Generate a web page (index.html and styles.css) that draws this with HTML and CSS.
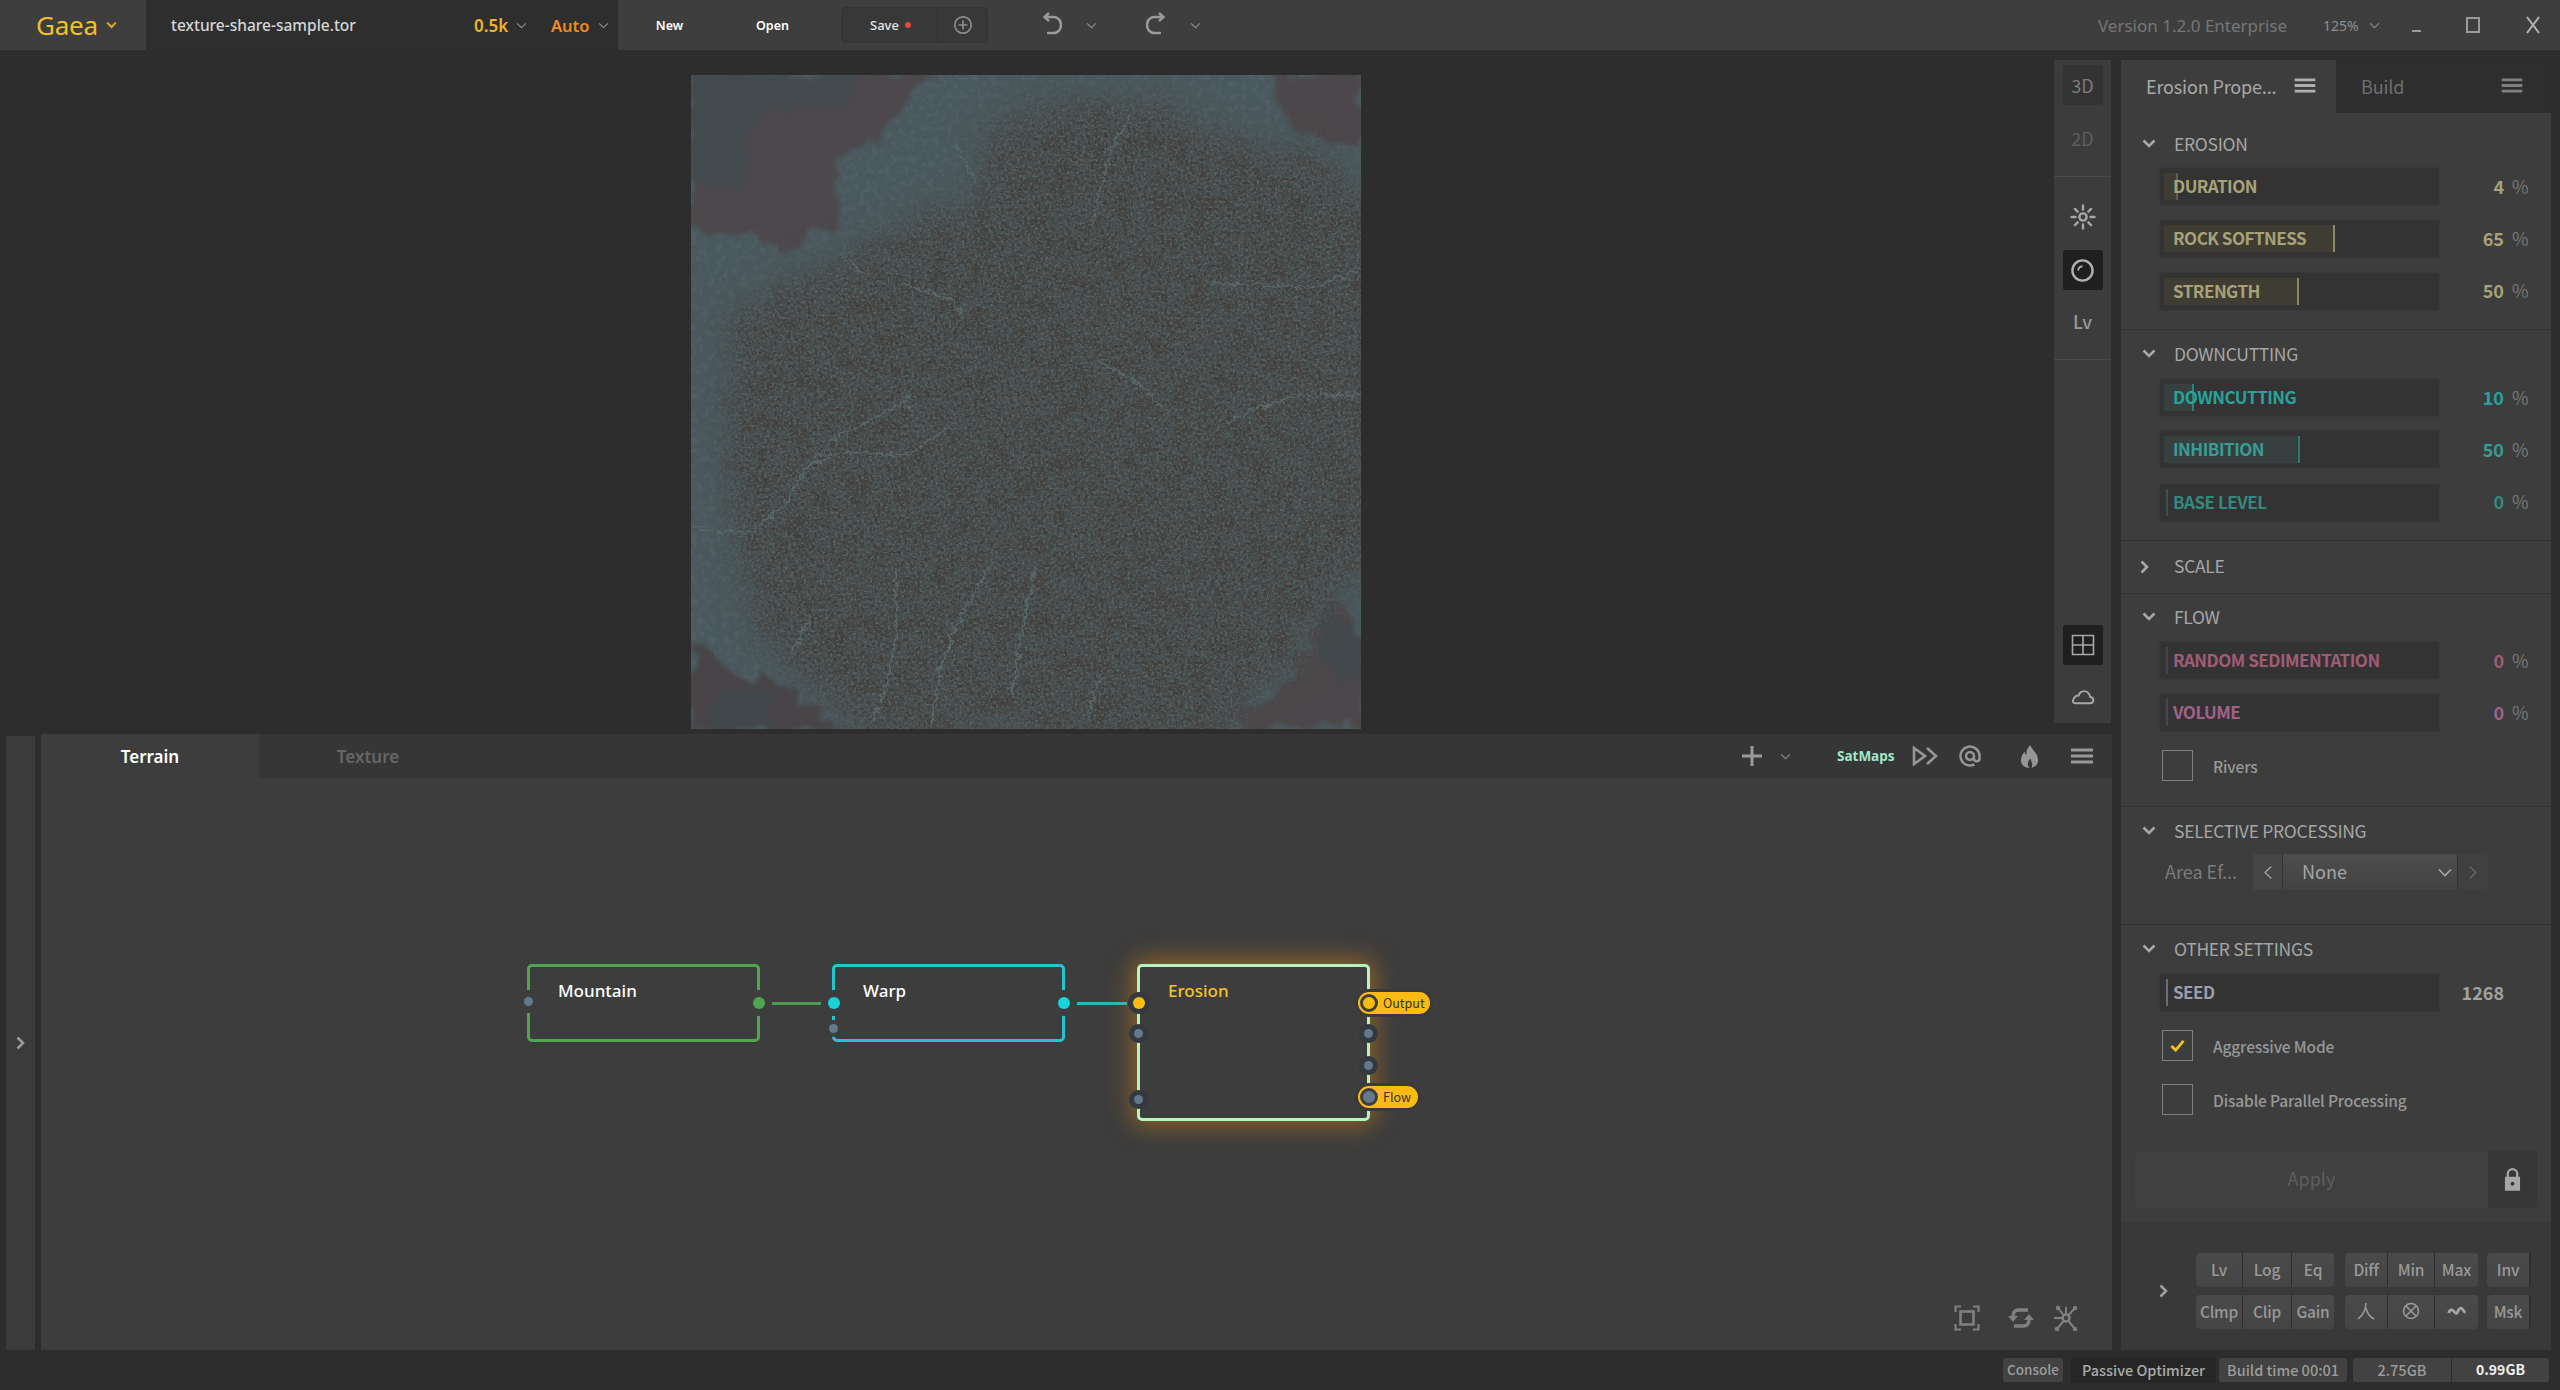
FILE: index.html
```html
<!DOCTYPE html>
<html lang="en">
<head>
<meta charset="utf-8">
<title>Gaea</title>
<link rel="stylesheet" href="styles.css">
</head>
<body>
<svg class="defs" width="0" height="0" aria-hidden="true">
  <symbol id="chev" viewBox="0 0 12 8"><path d="M1 1.5 6 6.5 11 1.5" fill="none" stroke="currentColor" stroke-width="1.3"/></symbol>
  <symbol id="chevb" viewBox="0 0 14 9"><path d="M1.5 1.5 7 7 12.5 1.5" fill="none" stroke="currentColor" stroke-width="2.6"/></symbol>
  <symbol id="chevr" viewBox="0 0 9 14"><path d="M1.5 1.5 7 7 1.5 12.5" fill="none" stroke="currentColor" stroke-width="2.6"/></symbol>
  <symbol id="menu" viewBox="0 0 22 16"><path d="M0 2h22M0 8h22M0 14h22" stroke="currentColor" stroke-width="3"/></symbol>
</svg>
<div class="app">
  <header class="topbar">
    <div class="brand"><span class="brand-name">Gaea</span><svg class="ic-brand"><use href="#chevb"/></svg></div>
    <div class="filebar">
      <span class="fname">texture-share-sample.tor</span>
      <span class="res">0.5k</span><svg class="ic-sel"><use href="#chev"/></svg>
      <span class="auto">Auto</span><svg class="ic-sel"><use href="#chev"/></svg>
    </div>
    <button class="tb new">New</button>
    <button class="tb open">Open</button>
    <div class="savegrp">
      <button class="save">Save<i class="dot"></i></button>
      <button class="plus"><svg viewBox="0 0 20 20" width="20" height="20"><circle cx="10" cy="10" r="8.2" fill="none" stroke="#8c8c8c" stroke-width="1.7"/><path d="M10 5.5v9M5.500 10h9" stroke="#8c8c8c" stroke-width="1.7"/></svg></button>
    </div>
    <svg class="ic-hist first" viewBox="0 0 20 26"><path d="M3 5h9a7 8 0 0 1 0 16H5" fill="none" stroke="#9b9b9b" stroke-width="2.4"/><path d="M7 1 2.500 5 7 9" fill="none" stroke="#9b9b9b" stroke-width="2.4"/></svg>
    <svg class="ic-sel hist"><use href="#chev"/></svg>
    <svg class="ic-hist second" viewBox="0 0 20 26"><path d="M17 5H8a7 8 0 0 0 0 16h7" fill="none" stroke="#9b9b9b" stroke-width="2.4"/><path d="M13 1l4.500 4L13 9" fill="none" stroke="#9b9b9b" stroke-width="2.4"/></svg>
    <svg class="ic-sel hist"><use href="#chev"/></svg>
    <div class="winbar">
      <span class="version">Version 1.2.0 Enterprise</span>
      <span class="zoomv">125%</span><svg class="ic-sel"><use href="#chev"/></svg>
      <i class="w-min"></i><i class="w-max"></i>
      <svg class="w-close" viewBox="0 0 16 18"><path d="M2 1 14 17M14 1 2 17" stroke="#b5b5b5" stroke-width="2"/></svg>
    </div>
  </header>

  <div class="main">
    <div class="work">
      <div class="viewport">
        <div class="preview">
          <svg viewBox="0 0 670 654" width="670" height="654" role="img" aria-label="Eroded terrain texture" color-interpolation-filters="sRGB">
            <defs>
              <filter id="rough" x="-10%" y="-10%" width="120%" height="120%" color-interpolation-filters="sRGB"><feTurbulence type="fractalNoise" baseFrequency="0.03" numOctaves="5" seed="7"/><feDisplacementMap in="SourceGraphic" scale="40" xChannelSelector="R" yChannelSelector="G"/><feGaussianBlur stdDeviation="2"/></filter>
              <filter id="blob" x="-10%" y="-10%" width="120%" height="120%" color-interpolation-filters="sRGB"><feTurbulence type="fractalNoise" baseFrequency="0.025" numOctaves="5" seed="14"/><feDisplacementMap in="SourceGraphic" scale="60" xChannelSelector="R" yChannelSelector="G"/><feGaussianBlur stdDeviation="16"/></filter>
              <filter id="rough2" x="-10%" y="-10%" width="120%" height="120%" color-interpolation-filters="sRGB"><feTurbulence type="fractalNoise" baseFrequency="0.14" numOctaves="4" seed="3"/><feDisplacementMap in="SourceGraphic" scale="10" xChannelSelector="G" yChannelSelector="R"/></filter>
              <filter id="specks" x="0" y="0" width="100%" height="100%" color-interpolation-filters="sRGB"><feTurbulence type="fractalNoise" baseFrequency="0.3" numOctaves="3" seed="11"/><feColorMatrix values="0 0 0 0 .255  0 0 0 0 .24  0 0 0 0 .22  7 0 0 0 -3.500"/></filter>
              <filter id="light" x="0" y="0" width="100%" height="100%" color-interpolation-filters="sRGB"><feTurbulence type="fractalNoise" baseFrequency="0.38" numOctaves="3" seed="23"/><feColorMatrix values="0 0 0 0 .345  0 0 0 0 .385  0 0 0 0 .395  0 7 0 0 -3.800"/></filter>
              <filter id="pale" x="0" y="0" width="100%" height="100%" color-interpolation-filters="sRGB"><feTurbulence type="fractalNoise" baseFrequency="0.16" numOctaves="3" seed="31"/><feColorMatrix values="0 0 0 0 .335  0 0 0 0 .395  0 0 0 0 .415  0 6 0 0 -3"/></filter>
              <filter id="brown" x="0" y="0" width="100%" height="100%" color-interpolation-filters="sRGB"><feTurbulence type="fractalNoise" baseFrequency="0.05" numOctaves="4" seed="5"/><feColorMatrix values="0 0 0 0 .27  0 0 0 0 .25  0 0 0 0 .23  5 0 0 0 -2.500"/></filter>
              <mask id="centre" maskUnits="userSpaceOnUse" x="0" y="0" width="670" height="654">
                <path filter="url(#blob)" fill="#fff" d="M40 230 125 195 205 160 285 125 300 45 470 15 510 65 625 75 690 130V500L640 530 585 620 515 670H185L120 620 55 555 30 400Z"/>
              </mask>
            </defs>
            <rect width="670" height="654" fill="#4a595d"/>
            <rect width="670" height="654" filter="url(#pale)" opacity=".5"/>
            <g filter="url(#rough)">
              <path d="M0 0H245L205 40 150 90 140 150 95 172 40 155 0 150Z" fill="#4c484b"/>
              <path d="M0 0H170L150 25 60 42 50 110 0 115Z" fill="#434a4e"/>
              <path d="M580 0H670V75L610 60 585 35Z" fill="#4c474a"/>
              <path d="M640 520 670 540V654H530L600 600 620 570Z" fill="#4c474a"/>
              <path d="M628 530 670 548V600L648 602 630 575Z" fill="#42484b"/>
              <path d="M0 570 50 595 110 625 150 654H0Z" fill="#484447"/>
              <path d="M25 612 70 614 95 654H25Z" fill="#41474a"/>
            </g>
            <g mask="url(#centre)">
              <rect width="670" height="654" fill="#484f50"/>
              <rect width="670" height="654" filter="url(#brown)" opacity=".55"/>
              <rect width="670" height="654" filter="url(#specks)" opacity=".85"/>
              <rect width="670" height="654" filter="url(#light)" opacity=".85"/>
            </g>
            <g filter="url(#rough2)" fill="none" stroke="#5d6e72" stroke-opacity=".85" stroke-width="1.600">
              <path d="M0 452 28 457 62 456 95 428 115 392 150 377 218 380 258 352"/>
              <path d="M115 392 148 360 200 335 220 320"/>
              <path d="M205 495 205 560 195 610 180 650"/>
              <path d="M300 490 270 540 250 590 240 650"/>
              <path d="M345 490 330 560 320 620"/>
              <path d="M670 320 600 322 560 335 530 350"/>
              <path d="M670 195 620 212 520 208"/>
              <path d="M440 40 420 75 400 150"/>
              <path d="M265 70 285 110"/>
              <path d="M405 285 450 310 480 340"/>
              <path d="M150 180 175 200"/>
              <path d="M410 600 395 640"/>
              <path d="M120 540 100 580"/>
              <path d="M225 340 215 330M215 210 260 225 275 240"/>
            </g>
          </svg>
        </div>
        <aside class="vtools">
          <div class="vbtn on">3D</div>
          <div class="vbtn dim">2D</div>
          <hr class="vsep">
          <div class="vbtn"><svg viewBox="0 0 26 26" width="26" height="26"><g stroke="#a6a6a6" stroke-width="2.400" stroke-linecap="round"><path d="M13 1.500v4M13 20.500v4M1.500 13h4M20.500 13h4M4.900 4.900l2.800 2.800M18.300 18.300l2.800 2.800M4.900 21.100l2.800-2.800M18.300 7.700l2.800-2.800"/></g><circle cx="13" cy="13" r="3.600" fill="none" stroke="#a6a6a6" stroke-width="2.400"/></svg></div>
          <div class="vbtn black"><svg viewBox="0 0 26 26" width="25" height="25"><circle cx="13" cy="13" r="10.500" fill="none" stroke="#b0b0b0" stroke-width="2.500"/><path d="M8.500 13A4.600 4.600 0 0 1 13 8.500" fill="none" stroke="#b0b0b0" stroke-width="2"/></svg></div>
          <div class="vbtn lv">Lv</div>
          <hr class="vsep">
          <div class="vspace"></div>
          <div class="vbtn black"><svg viewBox="0 0 24 24" width="24" height="24"><path d="M1.500 2.500h21v19h-21zM12 2.500v19M1.500 12h21" fill="none" stroke="#a8a8a8" stroke-width="1.600"/></svg></div>
          <div class="vbtn cloud"><svg viewBox="0 0 26 18" width="25" height="18"><path d="M5.500 15.500h15c5 0 5-6 .5-6.500C20.500 5 17 2.500 14 3c-3 .3-4.500 2.500-5 4.500C4 7.500 .5 15.500 5.500 15.500Z" fill="none" stroke="#a6a6a6" stroke-width="2"/></svg></div>
        </aside>
      </div>
      <div class="nodezone">
        <div class="strip"><svg class="strip-c"><use href="#chevr"/></svg></div>
        <section class="graph">
          <div class="graphbar">
            <div class="gtab active">Terrain</div>
            <div class="gtab">Texture</div>
            <div class="gtools">
              <svg class="g-plus" viewBox="0 0 20 20"><path d="M10 0v20M0 10h20" stroke="#9a9a9a" stroke-width="3"/></svg>
              <svg class="ic-sel g-chev"><use href="#chev"/></svg>
              <span class="satmaps">SatMaps</span>
              <svg class="g-ff" viewBox="0 0 26 20"><path d="M2 2 13 10 2 18Z" fill="none" stroke="#969696" stroke-width="2.600"/><path d="M15 2 24 10 15 18" fill="none" stroke="#969696" stroke-width="2.600"/></svg>
              <svg class="g-at" viewBox="0 0 24 24"><path d="M16 12a4 4 0 1 1 0-.1V15a2.800 2.800 0 0 0 5.500 0V12a9.500 9.500 0 1 0-5 8.400" fill="none" stroke="#969696" stroke-width="2.500"/></svg>
              <svg class="g-fire" viewBox="0 0 20 24"><path fill-rule="evenodd" d="M11 0c1 5 8 8 8 16 0 5-4 8-9 8s-9-3-9-8c0-4 2-7 4-9 0 2 1 3 2 3-1-4 1-7 4-10ZM10 24c-3-3-2-7 1-10 1 4 3 6 1 10Z" fill="#969696"/></svg>
              <svg class="g-menu"><use href="#menu"/></svg>
            </div>
          </div>
          <div class="canvas">
            <div class="wire w1"></div>
            <div class="wire w2"></div>
            <article class="node mountain">
              <span class="ntitle">Mountain</span>
              <i class="port in p-a"></i><i class="port big green p-b"></i>
            </article>
            <article class="node warp">
              <span class="ntitle">Warp</span>
              <i class="port big cyan in p-a"></i><i class="port in p-c"></i><i class="port big cyan p-b"></i>
            </article>
            <article class="node erosion">
              <span class="ntitle">Erosion</span>
              <i class="port big yellow halo in p-a"></i>
              <i class="port halo in p-d"></i><i class="port halo in p-e"></i>
              <i class="port halo out p-d"></i><i class="port halo out p-f"></i>
              <span class="pill p-out"><i class="ring"></i>Output</span>
              <span class="pill p-flow"><i class="ring blue"></i>Flow</span>
            </article>
            <div class="canvastools">
              <svg viewBox="0 0 26 26" width="26" height="26"><path d="M1.500 7V1.500H7M19 1.500h5.500V7M24.500 19v5.500H19M7 24.500H1.500V19" fill="none" stroke="#808080" stroke-width="2.200"/><rect x="6.500" y="6.500" width="13" height="13" fill="none" stroke="#808080" stroke-width="2.600"/></svg>
              <svg class="t-sync" viewBox="0 0 26 24" width="26" height="24"><path d="M5 10C5 5 8 4 11 4h9M21 14c0 5-3 6-6 6H6" fill="none" stroke="#808080" stroke-width="3.400"/><path d="M0 10h10l-5 6zM26 14H16l5-6z" fill="#808080"/></svg>
              <svg class="t-net" viewBox="0 0 26 26" width="26" height="26"><g stroke="#808080" stroke-width="2"><path d="M13 13 5 3M13 13 22 3M13 13 4 24M13 13 22 24M13 13 1 13M13 13 13 2"/></g><circle cx="13" cy="13" r="3.500" fill="#3d3d3d" stroke="#808080" stroke-width="2.500"/><circle cx="5" cy="3" r="2.200" fill="#808080"/><circle cx="22" cy="3" r="2.200" fill="#808080"/><circle cx="4" cy="24" r="2.200" fill="#808080"/><circle cx="22" cy="24" r="2.200" fill="#808080"/></svg>
            </div>
          </div>
        </section>
      </div>
    </div>

    <aside class="props">
      <div class="ptabs">
        <div class="ptab active"><span>Erosion Prope...</span><svg class="p-menu"><use href="#menu"/></svg></div>
        <div class="ptab"><span>Build</span><svg class="p-menu"><use href="#menu"/></svg></div>
      </div>
      <section class="sec s-erosion">
        <h3 class="sh"><svg class="sc"><use href="#chevb"/></svg>EROSION</h3>
        <div class="rows">
          <div class="row c-tan m-dim"><div class="slot"><span class="fill" style="width:14px"></span><span class="lab">DURATION</span></div><b class="val">4</b><span class="pct">%</span></div>
          <div class="row c-tan"><div class="slot"><span class="fill" style="width:171px"></span><span class="lab">ROCK SOFTNESS</span></div><b class="val">65</b><span class="pct">%</span></div>
          <div class="row c-tan"><div class="slot"><span class="fill" style="width:135px"></span><span class="lab">STRENGTH</span></div><b class="val">50</b><span class="pct">%</span></div>
        </div>
      </section>
      <section class="sec s-down">
        <h3 class="sh"><svg class="sc"><use href="#chevb"/></svg>DOWNCUTTING</h3>
        <div class="rows">
          <div class="row c-teal"><div class="slot"><span class="fill" style="width:30px"></span><span class="lab">DOWNCUTTING</span></div><b class="val">10</b><span class="pct">%</span></div>
          <div class="row c-teal2"><div class="slot"><span class="fill" style="width:136px"></span><span class="lab">INHIBITION</span></div><b class="val">50</b><span class="pct">%</span></div>
          <div class="row c-teal3"><div class="slot"><span class="fill" style="width:4px"></span><span class="lab">BASE LEVEL</span></div><b class="val">0</b><span class="pct">%</span></div>
        </div>
      </section>
      <section class="sec s-scale">
        <h3 class="sh"><svg class="sc right"><use href="#chevr"/></svg>SCALE</h3>
      </section>
      <section class="sec s-flow">
        <h3 class="sh"><svg class="sc"><use href="#chevb"/></svg>FLOW</h3>
        <div class="rows">
          <div class="row c-rose"><div class="slot"><span class="fill" style="width:4px"></span><span class="lab">RANDOM SEDIMENTATION</span></div><b class="val">0</b><span class="pct">%</span></div>
          <div class="row c-plum"><div class="slot"><span class="fill" style="width:4px"></span><span class="lab">VOLUME</span></div><b class="val">0</b><span class="pct">%</span></div>
        </div>
        <label class="check first"><i class="box"></i>Rivers</label>
      </section>
      <section class="sec s-sel">
        <h3 class="sh"><svg class="sc"><use href="#chevb"/></svg>SELECTIVE PROCESSING</h3>
        <div class="area">
          <span class="area-l">Area Ef...</span>
          <div class="spin">
            <span class="sp-b"><svg viewBox="0 0 10 16" width="10" height="15"><path d="M8.500 1.500 2 8l6.500 6.500" fill="none" stroke="#a0a0a0" stroke-width="1.600"/></svg></span>
            <span class="sp-m">None<svg class="sp-c" viewBox="0 0 14 9"><path d="M1 1.500 7 7.500l6-6" fill="none" stroke="#a8a8a8" stroke-width="1.600"/></svg></span>
            <span class="sp-b off"><svg viewBox="0 0 10 16" width="10" height="15"><path d="M1.500 1.500 8 8l-6.500 6.500" fill="none" stroke="#666" stroke-width="1.600"/></svg></span>
          </div>
        </div>
      </section>
      <section class="sec s-other">
        <h3 class="sh"><svg class="sc"><use href="#chevb"/></svg>OTHER SETTINGS</h3>
        <div class="rows">
          <div class="row c-seed"><div class="slot"><span class="fill" style="width:4px"></span><span class="lab">SEED</span></div><b class="val seedv">1268</b></div>
        </div>
        <label class="check aggr"><i class="box"><svg viewBox="0 0 16 14" width="15" height="13"><path d="M1.500 7.500 6 12 14.500 2" fill="none" stroke="#f4c21d" stroke-width="3"/></svg></i>Aggressive Mode</label>
        <label class="check dis"><i class="box"></i>Disable Parallel Processing</label>
      </section>
      <div class="applyrow">
        <div class="apply">Apply</div>
        <div class="lock"><svg viewBox="0 0 18 26" width="17" height="25"><path d="M4 11V7a5 5 0 0 1 10 0v4" fill="none" stroke="#a6a6a6" stroke-width="2.400"/><path fill-rule="evenodd" d="M1 10h16v15H1ZM9 15.500a2 2 0 1 0 .01 0Z" fill="#a6a6a6"/></svg></div>
      </div>
      <div class="quick">
        <svg class="q-c"><use href="#chevr"/></svg>
        <div class="qgrid">
          <div class="qg g1"><button>Lv</button><button>Log</button><button>Eq</button></div>
          <div class="qg g2"><button>Diff</button><button>Min</button><button>Max</button></div>
          <div class="qg g3"><button>Inv</button></div>
          <div class="qg g1"><button>Clmp</button><button>Clip</button><button>Gain</button></div>
          <div class="qg g2">
            <button><svg viewBox="0 0 18 18" width="18" height="18"><path d="M9 1C9 8 6 13 1 17M9 6c1 5 4 9 8 11" fill="none" stroke="#9a9a9a" stroke-width="1.500"/></svg></button>
            <button><svg viewBox="0 0 18 18" width="18" height="18"><circle cx="9" cy="9" r="7.500" fill="none" stroke="#9a9a9a" stroke-width="1.500"/><path d="M4 4l10 10M14 4 4 14" stroke="#9a9a9a" stroke-width="1.500"/></svg></button>
            <button><svg viewBox="0 0 20 10" width="20" height="10"><path d="M1.500 7C3 3 5 3 7 5.500S10 8 11 5 14 1 16 4 18 6 18.500 6" fill="none" stroke="#a8a8a8" stroke-width="2.800"/></svg></button>
          </div>
          <div class="qg g3"><button>Msk</button></div>
        </div>
      </div>
    </aside>
  </div>

  <footer class="status">
    <span class="st console">Console</span>
    <span class="st passive">Passive Optimizer</span>
    <span class="st build">Build time 00:01</span>
    <div class="mem"><span class="st m1">2.75GB</span><span class="st m2">0.99GB</span></div>
  </footer>
</div>
</body>
</html>
```
FILE: styles.css
```css
* { box-sizing: border-box; }
html, body { margin: 0; padding: 0; }
body { background: #2d2d2d; color: #aaa; font-family: "Noto Sans CJK SC", "Noto Sans", sans-serif; }
.defs { position: absolute; }
button { font: inherit; border: 0; padding: 0; }
i { display: block; font-style: normal; }

.app { width: 2560px; height: 1390px; display: grid; grid-template-rows: 50px 1300px 40px; overflow: hidden; }

/* top bar */
.topbar { display: flex; align-items: center; background: #3e3e3e; font-family: "Noto Sans", sans-serif; }
.brand { width: 146px; height: 50px; display: flex; align-items: center; padding-left: 36px; color: #f2c02a; }
.brand-name { font-size: 26px; line-height: 50px; width: 70px; letter-spacing: -.2px; }
.ic-brand { width: 11px; height: 8px; color: #e3ad28; }
.filebar { width: 472px; height: 50px; background: #2e2e2e; display: flex; align-items: center; padding-left: 25px; }
.fname { width: 303px; color: #d6d6d6; font-size: 15.500px; font-weight: 500; }
.res { width: 42px; color: #f0b429; font-size: 17px; font-weight: 600; }
.ic-sel { width: 11px; height: 7px; color: #8a8a8a; flex: none; }
.auto { margin-left: 24px; width: 44px; color: #f08c1c; font-size: 16.500px; font-weight: 600; }
.filebar .ic-sel:last-child { margin-left: 3px; }
.tb { width: 103px; height: 50px; background: none; color: #fff; font-size: 12.500px; font-weight: 600; }
.savegrp { margin-left: 17px; display: flex; width: 147px; height: 36px; border-radius: 5px; background: #383838; box-shadow: inset 0 0 0 1px #343434; }
.save { width: 97px; background: none; color: #e6e6e6; font-size: 13px; font-weight: 500; display: flex; align-items: center; padding-left: 29px; border-right: 1px solid #303030; }
.dot { width: 6px; height: 6px; border-radius: 50%; background: #e8453c; margin-left: 6px; }
.plus { width: 50px; background: none; display: flex; align-items: center; justify-content: center; }
.ic-hist { width: 20px; height: 26px; flex: none; }
.ic-hist.first { margin-left: 54px; }
.ic-hist.second { margin-left: 49px; }
.ic-sel.hist { margin-left: 24px; }
.winbar { margin-left: auto; display: flex; align-items: center; padding-right: 19px; }
.version { color: #767676; font-size: 17px; width: 225px; white-space: nowrap; }
.zoomv { color: #8e8e8e; font-size: 14px; width: 46px; }
.w-min { width: 9px; height: 2px; background: #9a9a9a; margin: 12px 0 0 32px; }
.w-max { width: 14px; height: 16px; border: 2px solid #9a9a9a; margin-left: 45px; }
.w-close { width: 16px; height: 18px; margin-left: 45px; }

/* main */
.main { display: flex; }
.work { width: 2112px; display: flex; flex-direction: column; }
.viewport { height: 684px; display: flex; }
.preview { margin: 25px 0 0 691px; width: 670px; height: 654px; }
.preview svg { display: block; }
.vtools { margin: 10px 0 0 693px; width: 57px; height: 663px; background: #3c3c3c; display: flex; flex-direction: column; align-items: center; padding-top: 5px; }
.vbtn { width: 40px; height: 40px; flex: none; border-radius: 2px; display: flex; align-items: center; justify-content: center; font-size: 18px; color: #999; }
.vbtn.on { background: #333; color: #7c7c7c; }
.vbtn.dim { margin-top: 13px; color: #5e5e5e; }
.vbtn.black { background: #1f1f1f; }
.vbtn.lv { margin-top: 11px; font-weight: 500; }
.vbtn.cloud { margin-top: 12px; }
.vsep { width: 100%; border: 0; border-top: 1px solid #4a4a4a; margin: 18px 0 20px; flex: none; }
.vsep:nth-of-type(2) { margin-bottom: 0; }
.vspace { flex: 1; }
.vtools .vbtn:nth-child(5) { margin-top: 13px; }
.vtools .vbtn:last-child { margin-bottom: 6px; }

/* graph */
.nodezone { flex: 1; display: flex; padding-left: 6px; }
.strip { width: 29px; margin-top: 2px; background: #3b3b3b; display: flex; align-items: flex-end; justify-content: center; padding-bottom: 300px; }
.strip-c { width: 9px; height: 14px; color: #999; }
.graph { margin-left: 6px; flex: 1; background: #3d3d3d; display: flex; flex-direction: column; }
.graphbar { height: 44px; background: #363636; display: flex; flex: none; }
.gtab { width: 218px; display: flex; align-items: center; justify-content: center; font-family: "Noto Sans", sans-serif; font-size: 17px; font-weight: 600; color: #666; }
.gtab.active { background: #3d3d3d; color: #fff; }
.gtools { flex: 1; display: flex; align-items: center; }
.g-plus { width: 20px; height: 20px; margin-left: 1265px; flex: none; }
.g-chev { margin-left: 18px; }
.satmaps { margin-left: 46px; width: 58px; font-size: 13.500px; font-weight: 700; color: #a0e8c8; font-family: "Noto Sans", sans-serif; white-space: nowrap; }
.g-ff { width: 26px; height: 20px; margin-left: 17px; flex: none; }
.g-at { width: 24px; height: 24px; margin-left: 20px; flex: none; }
.g-fire { width: 19px; height: 23px; margin-left: 38px; flex: none; }
.g-menu { width: 22px; height: 16px; margin-left: 32px; color: #999; flex: none; }

.canvas { flex: 1; position: relative; }
.node { position: absolute; top: 186px; height: 78px; width: 233px; border: 3px solid; border-radius: 5px; }
.mountain { left: 486px; border-color: #4fa64f; }
.warp { left: 791px; border-color: #22c6cf; }
.erosion { left: 1096px; width: 233px; height: 157px; border-color: #b8f2be; box-shadow: 0 0 24px 4px rgba(230, 140, 20, .5); }
.ntitle { position: absolute; left: 28px; top: 12px; font-family: "Noto Sans", sans-serif; font-size: 17px; line-height: 24px; font-weight: 500; color: #fff; }
.erosion .ntitle { color: #f4c22c; }
.port { position: absolute; width: 9px; height: 9px; border-radius: 50%; background: #64798a; box-shadow: 0 0 0 7px #3d3d3d; }
.port.big { width: 12px; height: 12px; }
.port.halo { box-shadow: 0 0 0 5px #33393e; }
.port.in { left: -6px; }
.port.big.in { left: -7.500px; }
.p-a { top: 30px; }
.p-b { right: -7.500px; top: 30px; }
.p-c { top: 57px; box-shadow: 0 0 0 4px #3d3d3d; }
.p-d { top: 62px; }
.p-e { top: 128px; }
.p-f { top: 94px; }
.port.out { right: -6px; }
.green { background: #4fa64f; }
.cyan { background: #18d4d8; }
.yellow { background: #fbbb12; }
.pill { position: absolute; left: 218px; height: 22px; border-radius: 11px; background: #fbbb12; color: #333; font-size: 12.500px; line-height: 22px; display: flex; align-items: center; padding-left: 25px; box-shadow: 0 0 0 3px #3a3a3a; }
.p-out { top: 25px; width: 72px; }
.p-flow { top: 119px; width: 60px; }
.ring { position: absolute; left: 2px; top: 2px; width: 18px; height: 18px; border-radius: 50%; background: #fbbb12; border: 3px solid #3e3e3e; }
.ring.blue { background: #64798a; }
.wire { position: absolute; height: 3px; top: 224px; }
.w1 { left: 730px; width: 50px; background: #4e9a4e; }
.w2 { left: 1034px; width: 52px; background: #27b6bd; }
.canvastools { position: absolute; right: 33px; bottom: 19px; display: flex; align-items: center; gap: 19px; }
.t-sync { margin-left: 9px; }

/* properties */
.props { margin: 10px 0 0 9px; width: 430px; height: 1290px; background: #3d3d3d; display: flex; flex-direction: column; font-size: 18px; }
.ptabs { display: flex; height: 53px; flex: none; background: #2e2e2e; }
.ptab { width: 215px; display: flex; align-items: center; color: #6f6f6f; padding: 0 0 2px 25px; position: relative; letter-spacing: -.15px; }
.ptab.active { background: #3d3d3d; color: #a9a9a9; }
.p-menu { position: absolute; right: 28px; top: 18px; width: 22px; height: 15px; color: #808080; }
.ptab.active .p-menu { right: 20px; color: #b0b0b0; }
.sec { flex: none; border-bottom: 1px solid #333; padding-top: 13px; }
.s-erosion { height: 217px; padding-top: 20px; }
.s-down { height: 211px; }
.s-scale { height: 53px; padding-top: 14px; }
.s-flow { height: 213px; padding-top: 12px; }
.s-sel { height: 118px; }
.s-other { height: 225px; border-bottom: 0; }
.sh { margin: 0; height: 24px; line-height: 22px; font-size: 17.500px; letter-spacing: -.3px; font-weight: 400; color: #a6a6a6; display: flex; align-items: center; padding: 0 0 2px 53px; position: relative; }
.sc { position: absolute; left: 21px; top: 6px; width: 14px; height: 9px; color: #a8a8a8; }
.sc.right { left: 19px; top: 5px; width: 9px; height: 14px; }
.rows { display: flex; flex-direction: column; gap: 13.330px; margin-top: 11px; }
.s-erosion .rows { margin-top: 10px; }
.row { display: flex; align-items: center; height: 39px; padding-left: 38px; color: var(--c); }
.slot { position: relative; width: 281px; height: 39px; background: #333; border: 1px solid #393939; display: flex; align-items: center; padding: 0 0 2px 13px; }
.fill { position: absolute; left: 4px; top: 5px; bottom: 5px; border-right: 2px solid var(--m, var(--c)); background: var(--f); }
.lab { position: relative; font-weight: 700; color: var(--c); font-size: 17px; letter-spacing: -.5px; white-space: nowrap; }
.val { width: 64px; text-align: right; font-weight: 700; padding-bottom: 2px; }
.pct { margin-left: 8px; color: #777; font-weight: 400; padding-bottom: 2px; }
.seedv { color: #a2a2a2; font-weight: 700; width: 64px; }
.c-tan { --c: #a8a278; --f: #3f3d33; --m: #8d8866; }
.m-dim { --m: #5f5c48; }
.c-teal { --c: #27a39b; --f: #37403e; --m: #2a807a; }
.c-teal2 { --c: #389c95; --f: #37403e; --m: #2d7a75; }
.c-teal3 { --c: #35887f; --f: #333; --m: #3e4f4d; }
.c-rose { --c: #a05c76; --f: #333; --m: #4e4148; }
.c-plum { --c: #a0628a; --f: #333; --m: #4e4150; }
.c-seed { --c: #9c9cac; --f: #333; --m: #6c6c78; }
.check { display: flex; align-items: center; height: 31px; margin: 18px 0 0 41px; color: #989898; font-size: 15.500px; font-weight: 500; letter-spacing: -.15px; }
.box { width: 31px; height: 31px; border: 1px solid #808080; margin-right: 20px; flex: none; display: flex; align-items: center; justify-content: center; }
.aggr { margin-top: 18px; }
.dis { margin-top: 23px; }
.area { display: flex; align-items: center; margin-top: 10px; height: 36px; padding-left: 44px; }
.area-l { width: 88px; color: #7c7c7c; padding-bottom: 2px; }
.spin { display: flex; height: 36px; }
.sp-b { width: 30px; background: #454545; border-radius: 3px 0 0 3px; display: flex; align-items: center; justify-content: center; border-right: 1px solid #333; }
.sp-b.off { background: #404040; border-radius: 0 3px 3px 0; border: 0; }
.sp-m { width: 175px; background: linear-gradient(#4d4d4d, #434343); color: #a6a6a6; display: flex; align-items: center; padding: 0 0 2px 19px; position: relative; border-right: 1px solid #333; }
.sp-c { position: absolute; right: 5px; top: 14px; width: 14px; height: 9px; }
.applyrow { display: flex; height: 57px; margin: 1px 0 0 14px; width: 402px; flex: none; background: #404040; border-radius: 4px; }
.apply { width: 353px; text-align: center; line-height: 55px; color: #5e5e5e; }
.lock { width: 49px; background: #373737; border-radius: 0 4px 4px 0; display: flex; align-items: center; justify-content: center; }
.quick { margin-top: 14px; flex: 1; background: #393939; position: relative; padding: 31px 0 0 75px; }
.q-c { position: absolute; left: 38px; top: 62px; width: 9px; height: 14px; color: #a0a0a0; }
.qgrid { display: grid; grid-template-columns: 138px 133px 42px; grid-auto-rows: 34px; column-gap: 11px; row-gap: 8px; }
.qg { display: flex; border-radius: 4px; overflow: hidden; gap: 1px; background: #2e2e2e; }
.qg.g3 { margin-left: -2px; }
.qg button { flex: none; min-width: 0; background: linear-gradient(#4a4a4a, #454545); color: #999; font-size: 15.500px; font-weight: 500; letter-spacing: -.2px; display: flex; align-items: center; justify-content: center; padding-bottom: 2px; }
.g1 button:nth-child(1) { width: 46px; }
.g1 button:nth-child(2) { width: 48px; }
.g1 button:nth-child(3) { width: 42px; }
.g2 button:nth-child(1) { width: 42px; }
.g2 button:nth-child(2) { width: 46px; }
.g2 button:nth-child(3) { width: 43px; }
.g3 button { width: 42px; }

/* status */
.status { display: flex; align-items: center; padding: 0 11px 0 2003px; font-size: 14.500px; }
.st { height: 24px; display: flex; align-items: center; justify-content: center; background: #424242; color: #9c9c9c; border-radius: 3px; font-weight: 500; white-space: nowrap; padding-bottom: 2px; }
.console { width: 60px; font-size: 13.500px; }
.passive { width: 145px; margin-left: 8px; background: #262626; color: #aaa; height: 26px; }
.build { width: 128px; margin-left: 3px; }
.mem { display: flex; margin-left: 6px; gap: 1px; }
.m1 { width: 98px; border-radius: 3px 0 0 3px; }
.m2 { width: 97px; border-radius: 0 3px 3px 0; color: #f0f0f0; font-weight: 700; font-size: 14px; }
```
